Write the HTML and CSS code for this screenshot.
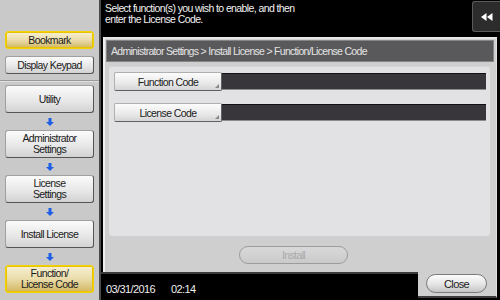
FILE: index.html
```html
<!DOCTYPE html>
<html>
<head>
<meta charset="utf-8">
<link rel="stylesheet" href="styles.css">
</head>
<body>
<div class="screen">
  <aside class="sidebar">
    <div class="side-top">
      <div class="sbtn yellow short">Bookmark</div>
      <div class="sbtn short">Display Keypad</div>
    </div>
    <div class="flow">
      <div class="sbtn step">Utility</div>
      <svg class="arrow" width="8" height="8" viewBox="0 0 8 8"><path d="M2.5 0h3v4h2.5L4 8 0 4h2.5z" fill="#1e5ee6"/></svg>
      <div class="sbtn step">Administrator<br>Settings</div>
      <svg class="arrow" width="8" height="8" viewBox="0 0 8 8"><path d="M2.5 0h3v4h2.5L4 8 0 4h2.5z" fill="#1e5ee6"/></svg>
      <div class="sbtn step">License<br>Settings</div>
      <svg class="arrow" width="8" height="8" viewBox="0 0 8 8"><path d="M2.5 0h3v4h2.5L4 8 0 4h2.5z" fill="#1e5ee6"/></svg>
      <div class="sbtn step">Install License</div>
      <svg class="arrow" width="8" height="8" viewBox="0 0 8 8"><path d="M2.5 0h3v4h2.5L4 8 0 4h2.5z" fill="#1e5ee6"/></svg>
      <div class="sbtn step yellow">Function/<br>License Code</div>
    </div>
  </aside>
  <main class="main">
    <header class="head">
      <p class="msg">Select function(s) you wish to enable, and then<br>enter the License Code.</p>
      <div class="back">
        <svg width="12" height="8" viewBox="0 0 12 8"><path d="M0 4L5.5 0v8zM6 4L11.5 0v8z" fill="#fff"/></svg>
      </div>
    </header>
    <section class="panel">
      <div class="crumb">Administrator Settings &gt; Install License &gt; Function/License Code</div>
      <div class="content">
        <div class="row">
          <div class="fbtn">Function Code</div>
          <div class="field"></div>
        </div>
        <div class="row">
          <div class="fbtn">License Code</div>
          <div class="field"></div>
        </div>
      </div>
      <div class="actions">
        <div class="pill disabled">Install</div>
      </div>
    </section>
    <footer class="foot">
      <div class="status"><span>03/31/2016</span><span>02:14</span></div>
      <div class="tab"><div class="pill close">Close</div></div>
    </footer>
  </main>
</div>
</body>
</html>
```
FILE: styles.css
```css
* { box-sizing: border-box; }
html, body { margin: 0; padding: 0; }
body {
  width: 500px;
  height: 300px;
  background: #000;
  font-family: "Liberation Sans", Arial, sans-serif;
  font-size: 10.5px;
  letter-spacing: -0.6px;
  overflow: hidden;
}
.screen {
  display: flex;
  width: 500px;
  height: 300px;
}
.sidebar {
  width: 101px;
  background: #c9c9c9;
  border-right: 2px solid #4a4a4a;
  display: flex;
  flex-direction: column;
}
.side-top {
  height: 81px;
  padding: 31px 0 0 5px;
  display: flex;
  flex-direction: column;
  gap: 7px;
  border-bottom: 1px solid #9a9a9a;
  box-shadow: 0 1px 0 #e0e0e0;
}
.sbtn {
  width: 89px;
  display: flex;
  align-items: center;
  justify-content: center;
  text-align: center;
  color: #1a1a1a;
  line-height: 11px;
  border: 1px solid #a0a0a0;
  border-right-color: #555;
  border-bottom-color: #555;
  border-radius: 3px;
  background: linear-gradient(#fbfbfb, #e6e6e6 60%, #d2d2d2);
}
.sbtn.short { height: 18px; }
.sbtn.yellow {
  border: 1px solid #f2d200;
  box-shadow: inset 0 0 0 1px #e8c400;
  background: linear-gradient(#f7f0d2, #eadcaa 50%, #d2b660);
}
.flow {
  padding: 4px 0 0 5px;
  display: flex;
  flex-direction: column;
}
.sbtn.step { height: 28px; }
.arrow {
  display: block;
  margin: 5px 0 4px 41px;
}
.main {
  flex: 1;
  display: flex;
  flex-direction: column;
}
.head {
  height: 37px;
  display: flex;
  justify-content: space-between;
  align-items: flex-start;
}
.msg {
  margin: 3px 0 0 4px;
  color: #f2f2f2;
  font-size: 10.5px;
  line-height: 11px;
}
.back {
  width: 28px;
  height: 31px;
  margin-top: 1px;
  background: #2c2c2c;
  border: 1px solid #5a5a5a;
  border-right: none;
  border-radius: 3px 0 0 3px;
  display: flex;
  align-items: center;
  justify-content: center;
}
.panel {
  height: 235px;
  margin: 0 3px 0 2px;
  background: #cfcfcf;
  border-top: 2px solid #e6e6e6;
  border-left: 2px solid #f0f0f0;
  border-right: 1px solid #e0e0e0;
  padding: 1px 2px 0 1px;
  display: flex;
  flex-direction: column;
}
.crumb {
  height: 22px;
  background: #59595b;
  border: 1px solid #858585;
  color: #e4e4e4;
  padding-left: 4px;
  display: flex;
  align-items: center;
  font-size: 10.5px;
  letter-spacing: -0.7px;
}
.content {
  margin: 4px 4px 0 3px;
  height: 170px;
  background: #e2e1e4;
  border-radius: 3px;
  border-top: 1px solid #d6d6d6;
  padding: 5px 4px 0 5px;
  display: flex;
  flex-direction: column;
  gap: 12px;
}
.row {
  display: flex;
  align-items: center;
  height: 19px;
}
.fbtn {
  position: relative;
  width: 108px;
  height: 19px;
  display: flex;
  align-items: center;
  justify-content: center;
  color: #1a1a1a;
  border: 1px solid #b0b0b0;
  border-right-color: #606060;
  border-bottom-color: #606060;
  border-radius: 2px;
  background: linear-gradient(#fcfcfc, #e9e9e9 60%, #d4d4d4);
}
.fbtn::after {
  content: "";
  position: absolute;
  right: 2px;
  bottom: 2px;
  border-left: 4px solid transparent;
  border-bottom: 4px solid #8a8a8a;
}
.field {
  flex: 1;
  height: 17px;
  background: #38363a;
  border-top: 1px solid #111;
  border-bottom: 1px solid #8c8c8c;
}
.actions {
  display: flex;
  padding: 10px 0 0 133px;
}
.pill {
  display: flex;
  align-items: center;
  justify-content: center;
  border-radius: 10px;
}
.pill.disabled {
  width: 109px;
  height: 18px;
  color: #a9a9a9;
  border: 1px solid #9c9c9c;
  background: linear-gradient(#d9d9d9, #cacaca);
}
.foot {
  flex: 1;
  display: flex;
}
.status {
  flex: 1;
  border-top: 2px solid #3a3a3a;
  color: #eeeeee;
  font-size: 11px;
  padding: 9px 0 0 5px;
  display: flex;
  gap: 16px;
}
.tab {
  width: 79px;
  margin-right: 3px;
  height: 26px;
  background: #cfcfcf;
  border-right: 1px solid #e0e0e0;
  border-bottom: 2px solid #3c3c3c;
  padding: 2px 0 0 8px;
}
.pill.close {
  width: 61px;
  height: 19px;
  color: #1a1a1a;
  border: 1px solid #7a7a7a;
  background: linear-gradient(#fdfdfd, #e4e4e4 55%, #c4c4c4);
  font-size: 11px;
}
```
